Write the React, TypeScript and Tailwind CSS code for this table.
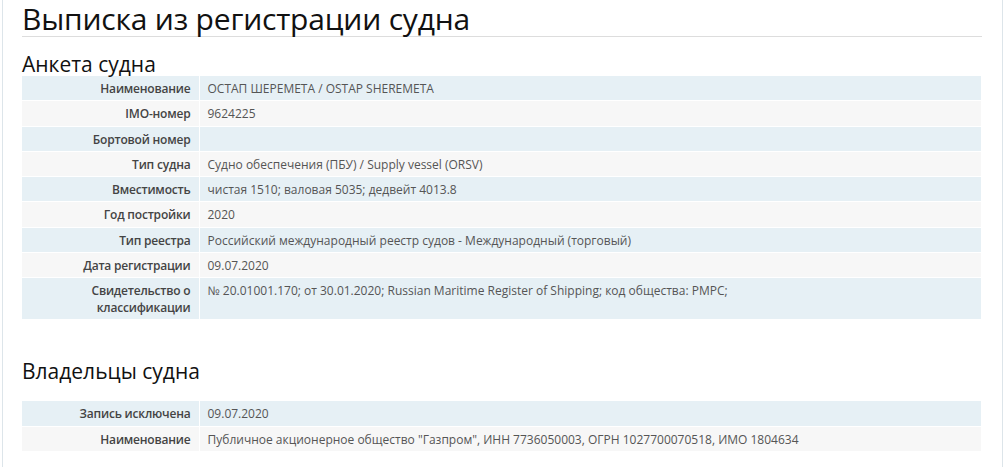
const vessel: [string, string][] = [
  ['Наименование', 'ОСТАП ШЕРЕМЕТА / OSTAP SHEREMETA'],
  ['IMO-номер', '9624225'],
  ['Бортовой номер', ''],
  ['Тип судна', 'Судно обеспечения (ПБУ) / Supply vessel (ORSV)'],
  ['Вместимость', 'чистая 1510; валовая 5035; дедвейт 4013.8'],
  ['Год постройки', '2020'],
  ['Тип реестра', 'Российский международный реестр судов - Международный (торговый)'],
  ['Дата регистрации', '09.07.2020'],
  ['Свидетельство о классификации', '№ 20.01001.170; от 30.01.2020; Russian Maritime Register of Shipping; код общества: РМРС;'],
]

const owners: [string, string][] = [
  ['Запись исключена', '09.07.2020'],
  ['Наименование', 'Публичное акционерное общество "Газпром", ИНН 7736050003, ОГРН 1027700070518, ИМО 1804634'],
]

function InfoTable({ rows }: { rows: [string, string][] }) {
  return (
    <table className="w-full border-collapse text-[12px] leading-[17px]">
      <tbody>
        {rows.map(([label, value], i) => (
          <tr key={i} className={i % 2 === 0 ? 'bg-[#e6f0f5]' : 'bg-[#f7f7f7]'}>
            <th className="w-[177px] border-r border-b border-white px-2 pt-[4px] pb-[3.25px] text-right align-top font-semibold tracking-[-0.2px] text-[#444]">
              {label}
            </th>
            <td className="border-b border-white px-2 pt-[4px] pb-[3.25px] align-top text-[#555]">
              {value}
            </td>
          </tr>
        ))}
      </tbody>
    </table>
  )
}

export default function App() {
  return (
    <div className="min-h-[467px] bg-white pl-[2px] pr-[2px]" style={{ fontFamily: '"Open Sans", "Noto Sans", sans-serif' }}>
      <div className="min-h-[467px] border-x border-[#dde5ea] pl-[19px] pr-[20px]">
        <div className="w-[960px]">
          <h1 className="pt-[2px] text-[30px] leading-[33px] font-normal tracking-[-0.2px] text-[#111]">Выписка из регистрации судна</h1>
          <div className="border-b border-[#ddd] mt-[1px]" />
          <h2 className="mt-[15px] text-[21px] leading-[24px] text-[#111]">Анкета судна</h2>
          <div className="w-[959px]">
            <InfoTable rows={vessel} />
          </div>
          <h2 className="mt-[39px] mb-[18px] text-[21px] leading-[24px] text-[#111]">Владельцы судна</h2>
          <div className="w-[959px]">
            <InfoTable rows={owners} />
          </div>
        </div>
      </div>
    </div>
  )
}
